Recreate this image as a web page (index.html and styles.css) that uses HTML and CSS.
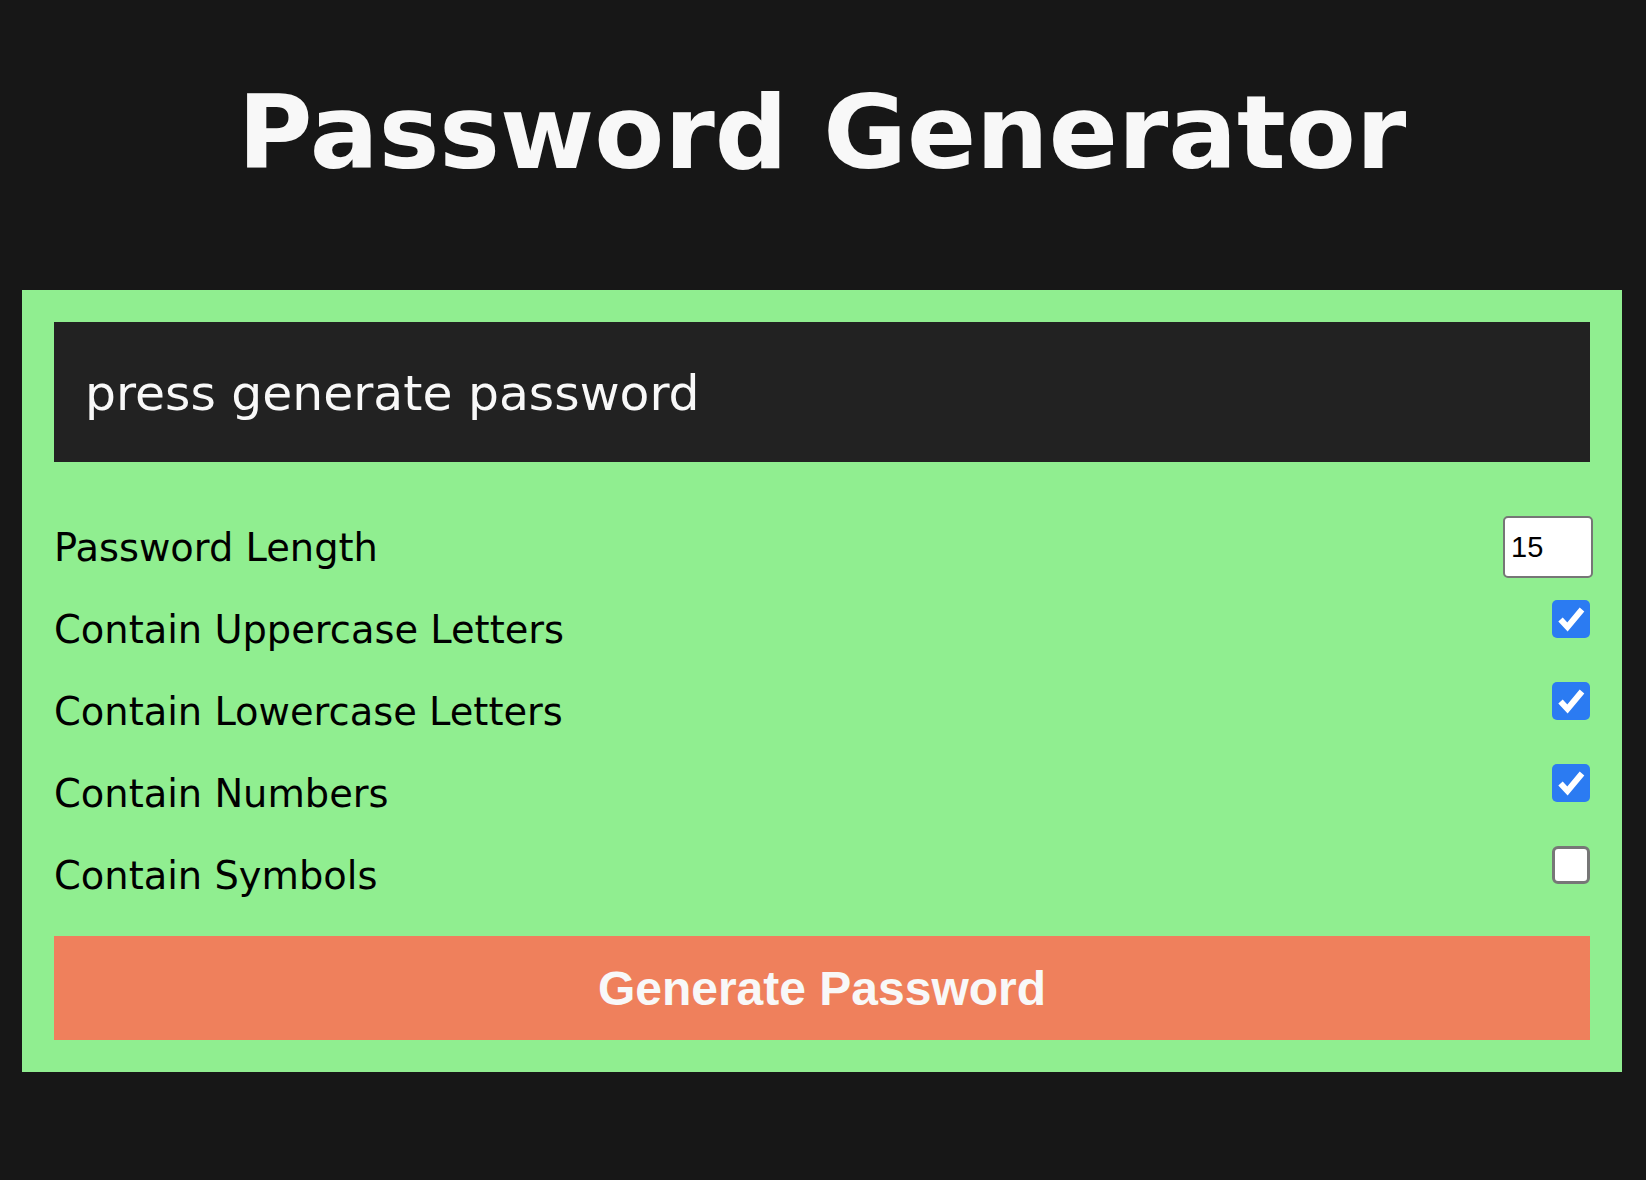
FILE: index.html
```html
<!DOCTYPE html>
<html lang="en">
<head>
<meta charset="utf-8">
<title>Password Generator</title>
<link rel="stylesheet" href="styles.css">
</head>
<body>
<main class="app">
  <h1 class="title">Password Generator</h1>
  <section class="card">
    <div class="result">press generate password</div>
    <div class="settings">
      <div class="setting">
        <label class="setting-label" for="length">Password Length</label>
        <input class="length-input" type="number" id="length" value="15" min="4" max="64">
      </div>
      <div class="setting">
        <span class="setting-label">Contain Uppercase Letters</span>
        <span class="check is-checked"><svg viewBox="0 0 38 38" width="38" height="38"><polyline points="8.5,19.5 15.5,27 30,9.5" fill="none" stroke="#fff" stroke-width="6" stroke-linejoin="miter" stroke-linecap="butt"/></svg></span>
      </div>
      <div class="setting">
        <span class="setting-label">Contain Lowercase Letters</span>
        <span class="check is-checked"><svg viewBox="0 0 38 38" width="38" height="38"><polyline points="8.5,19.5 15.5,27 30,9.5" fill="none" stroke="#fff" stroke-width="6" stroke-linejoin="miter" stroke-linecap="butt"/></svg></span>
      </div>
      <div class="setting">
        <span class="setting-label">Contain Numbers</span>
        <span class="check is-checked"><svg viewBox="0 0 38 38" width="38" height="38"><polyline points="8.5,19.5 15.5,27 30,9.5" fill="none" stroke="#fff" stroke-width="6" stroke-linejoin="miter" stroke-linecap="butt"/></svg></span>
      </div>
      <div class="setting">
        <span class="setting-label">Contain Symbols</span>
        <span class="check"></span>
      </div>
    </div>
    <button class="generate-btn" type="button">Generate Password</button>
  </section>
</main>
</body>
</html>
```
FILE: styles.css
```css
* { box-sizing: border-box; }

html, body {
  margin: 0;
  background: #171717;
}

body {
  font-family: "DejaVu Sans", "Noto Sans", sans-serif;
  min-height: 1180px;
}

.app {
  padding: 82px 24px 0 22px;
}

.title {
  margin: 0 0 106px;
  font-size: 102px;
  line-height: 1;
  font-weight: 700;
  color: #f8f8f8;
  text-align: center;
  letter-spacing: 0;
}

.card {
  width: 1600px;
  background: #90ee90;
  padding: 32px;
}

.result {
  height: 140px;
  background: #222222;
  color: #f8f8f8;
  font-size: 48.8px;
  display: flex;
  align-items: center;
  padding: 2px 31px 0;
}

.settings {
  margin-top: 44px;
  margin-bottom: 20px;
}

.setting {
  height: 82px;
  display: flex;
  align-items: center;
  justify-content: space-between;
}

.setting-label {
  font-size: 38.4px;
  color: #000;
}

.length-input {
  width: 90px;
  height: 62px;
  margin-right: -3px;
  border: 2px solid #767676;
  border-radius: 5px;
  background: #fff;
  padding: 0 4px 0 6px;
  font-family: "Liberation Sans", Arial, sans-serif;
  font-size: 29px;
  color: #000;
}

.check {
  width: 38px;
  height: 38px;
  margin-bottom: 20px;
  border-radius: 6px;
  background: #fff;
  border: 3px solid #777777;
  display: block;
}

.check.is-checked {
  background: #2b7bf2;
  border: none;
  border-radius: 5px;
}

.check svg {
  display: block;
}

.generate-btn {
  display: block;
  width: 100%;
  height: 104px;
  border: none;
  background: #ef805c;
  color: #f8f8f8;
  font-family: "Liberation Sans", Arial, sans-serif;
  font-weight: 700;
  font-size: 48px;
  padding: 0;
  cursor: pointer;
}
```
